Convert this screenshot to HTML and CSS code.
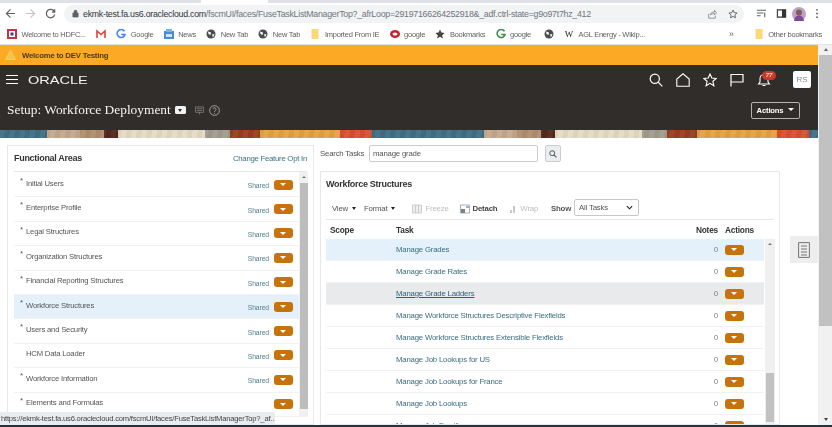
FILE: index.html
```html
<!DOCTYPE html>
<html lang="en">
<head>
<meta charset="utf-8">
<title>Setup: Workforce Deployment</title>
<link rel="stylesheet" href="styles.css">
</head>
<body>
<div class="window">
  <div class="tabstrip"><span class="active-tab"></span></div>
  <div class="toolbar">
    <svg class="tb-icon" viewBox="0 0 12 12"><path d="M11 6H2M6 1.500 1.500 6 6 10.500" fill="none" stroke="#5f6368" stroke-width="1.300"/></svg>
    <svg class="tb-icon" viewBox="0 0 12 12"><path d="M1 6h9M6 1.500 10.500 6 6 10.500" fill="none" stroke="#c0c3c7" stroke-width="1.300"/></svg>
    <svg class="tb-icon" viewBox="0 0 12 12"><path d="M10.200 4A4.600 4.600 0 1 0 10.600 7M10.600 1.400V4.400H7.600" fill="none" stroke="#5f6368" stroke-width="1.300"/></svg>
    <div class="address">
      <svg class="lock" viewBox="0 0 8 10"><path d="M1 4.500h6V9H1zM2.300 4.500V3a1.700 1.700 0 0 1 3.400 0v1.500" fill="#5f6368" stroke="#5f6368" stroke-width=".8"/></svg>
      <span class="url"><b>ekmk-test.fa.us6.oraclecloud.com</b>/fscmUI/faces/FuseTaskListManagerTop?_afrLoop=29197166264252918&amp;_adf.ctrl-state=g9o97t7hz_412</span>
      <svg class="addr-icon share" viewBox="0 0 12 12"><path d="M2 5.500V11h8V8M4 7c.5-2.500 2.500-3.500 5-3.500V1.500L11.500 4.500 9 7V5.500C7 5.500 5.500 6 4 7z" fill="none" stroke="#777" stroke-width=".9"/></svg>
      <svg class="addr-icon" viewBox="0 0 12 12"><path d="M6 1.200 7.400 4.400 10.900 4.800 8.300 7.100 9 10.600 6 8.800 3 10.600 3.700 7.100 1.100 4.800 4.600 4.400z" fill="none" stroke="#555" stroke-width="1"/></svg>
    </div>
    <svg class="tb-icon list" viewBox="0 0 12 12"><path d="M1 2.500h10M1 5.500h7M1 8.500h4M9.500 5v5" fill="none" stroke="#5f6368" stroke-width="1.200"/></svg>
    <svg class="tb-icon" viewBox="0 0 12 12"><path d="M1.500 2h9v8h-9z" fill="none" stroke="#333" stroke-width="1.200"/><path d="M6.500 2h4v8h-4z" fill="#333"/></svg>
    <span class="avatar"><svg viewBox="0 0 14 14"><circle cx="7" cy="7" r="7" fill="#b9a2c8"/><circle cx="7" cy="5.500" r="3" fill="#8a5a58"/><path d="M2 14c.5-4 2.500-5.500 5-5.500S11.500 10 12 14z" fill="#7d4b94"/></svg></span>
    <svg class="tb-icon more" viewBox="0 0 4 12"><circle cx="2" cy="2" r="1" fill="#5f6368"/><circle cx="2" cy="6" r="1" fill="#5f6368"/><circle cx="2" cy="10" r="1" fill="#5f6368"/></svg>
  </div>
  <div class="bookmarks">
    <span class="bm"><svg class="fav" viewBox="0 0 10 10"><path d="M0 0h10v10H0z" fill="#c8313f"/><path d="M2 2h6v6H2z" fill="#fff"/><path d="M3.500 3.500h3v3h-3z" fill="#224a8c"/></svg>Welcome to HDFC...</span>
    <span class="bm"><svg class="fav" viewBox="0 0 10 10"><path d="M1 9V2l4 3.500L9 2v7" fill="none" stroke="#d9443a" stroke-width="1.600"/></svg></span>
    <span class="bm"><svg class="fav" viewBox="0 0 10 10"><path d="M8.500 2.300A4 4 0 1 0 9 5.500H5.200" fill="none" stroke="#4285f4" stroke-width="1.600"/></svg>Google</span>
    <span class="bm"><svg class="fav" viewBox="0 0 10 10"><path d="M0 2h10v8H0z" fill="#4a8bd6"/><path d="M2 0h6v3H2z" fill="#7cb3e8"/><path d="M2 5h6v3H2z" fill="#cfe3f6"/></svg>News</span>
    <span class="bm"><svg class="fav" viewBox="0 0 10 10"><circle cx="5" cy="5" r="4.500" fill="#4a4d50"/><path d="M2 2.500 5 3.500 4.500 6 2.500 5zM6 5.500 8.500 5 7 8.500z" fill="#fff"/></svg>New Tab</span>
    <span class="bm"><svg class="fav" viewBox="0 0 10 10"><circle cx="5" cy="5" r="4.500" fill="#4a4d50"/><path d="M2 2.500 5 3.500 4.500 6 2.500 5zM6 5.500 8.500 5 7 8.500z" fill="#fff"/></svg>New Tab</span>
    <span class="bm"><svg class="fav" viewBox="0 0 10 10"><path d="M1.500 0h7v10h-7z" fill="#fbd976"/></svg>Imported From IE</span>
    <span class="bm"><svg class="fav" viewBox="0 0 10 10"><ellipse cx="5" cy="5" rx="5" ry="4" fill="#c8202c"/><ellipse cx="5" cy="5" rx="2.500" ry="1.500" fill="#fff"/></svg>google</span>
    <span class="bm"><svg class="fav" viewBox="0 0 10 10"><path d="M5 .5 6.400 3.600 9.700 4 7.200 6.200 7.900 9.500 5 7.800 2.100 9.500 2.800 6.200.3 4 3.600 3.600z" fill="#444"/></svg>Bookmarks</span>
    <span class="bm"><svg class="fav" viewBox="0 0 10 10"><path d="M8.500 2.300A4 4 0 1 0 9 5.500H5.200" fill="none" stroke="#3f8f4f" stroke-width="1.600"/></svg>google</span>
    <span class="bm bm-globe"><svg class="fav" viewBox="0 0 10 10"><circle cx="5" cy="5" r="4.500" fill="#4a4d50"/><path d="M2 2.500 5 3.500 4.500 6 2.500 5zM6 5.500 8.500 5 7 8.500z" fill="#fff"/></svg></span>
    <span class="bm"><span class="wiki">W</span>AGL Energy - Wikip...</span>
    <span class="bm-more">»</span>
    <span class="bm"><svg class="fav" viewBox="0 0 10 10"><path d="M1.500 0h7v10h-7z" fill="#fbd976"/></svg>Other bookmarks</span>
  </div>

  <div class="viewport">
    <div class="page">
      <div class="notice">
        <svg class="warn" viewBox="0 0 12 11"><path d="M6 .5 11.500 10.500H.5z" fill="#f7c23c" stroke="#e6e0b0" stroke-width=".7"/></svg>
        <span>Welcome to DEV Testing</span>
      </div>
      <header class="header">
        <div class="nav">
          <span class="burger"><i></i><i></i><i></i></span>
          <span class="logo">ORACLE</span>
          <div class="nav-icons">
            <svg class="nav-icon" viewBox="0 0 14 14"><circle cx="5.800" cy="5.800" r="4.600" fill="none" stroke="#fff" stroke-width="1.200"/><path d="M9.200 9.200 13.300 13.300" stroke="#fff" stroke-width="1.200"/></svg>
            <svg class="nav-icon" viewBox="0 0 14 14"><path d="M.8 13.300V6L7 .8 13.200 6v7.300z" fill="none" stroke="#fff" stroke-width="1.100"/></svg>
            <svg class="nav-icon" viewBox="0 0 14 14"><path d="M7 1 8.800 5 13.300 5.400 9.900 8.300 10.900 12.800 7 10.400 3.100 12.800 4.100 8.300.7 5.400 5.200 5z" fill="none" stroke="#fff" stroke-width="1.100"/></svg>
            <svg class="nav-icon" viewBox="0 0 14 14"><path d="M1 13.500V1.500h12v7.500H1" fill="none" stroke="#fff" stroke-width="1.200"/></svg>
            <span class="bell">
              <svg class="nav-icon" viewBox="0 0 14 14"><path d="M1.500 11h11L11 9V5.500a4 4 0 0 0-8 0V9zM5.500 12.500h3" fill="none" stroke="#fff" stroke-width="1.100"/></svg>
              <span class="badge">77</span>
            </span>
            <span class="user">RS</span>
          </div>
        </div>
        <div class="titlebar">
          <h1 class="title">Setup: Workforce Deployment</h1>
          <span class="title-menu"></span>
          <svg class="chat" viewBox="0 0 10 10"><path d="M.5 1h9v6h-9zM2 3h6M2 5h6M5 7v2.500" fill="none" stroke="#8b8b88" stroke-width=".8"/></svg>
          <svg class="help" viewBox="0 0 12 12"><circle cx="6" cy="6" r="5.300" fill="none" stroke="#c9c9c7" stroke-width=".8"/><path d="M4.300 4.700a1.700 1.700 0 1 1 2.600 1.500c-.6.400-.9.700-.9 1.300M6 8.500v1" fill="none" stroke="#c9c9c7" stroke-width=".8"/></svg>
          <button class="actions-btn">Actions<i></i></button>
        </div>
      </header>
      <div class="banner"></div>
      <main class="main">
        <section class="areas">
          <div class="areas-head">
            <h2>Functional Areas</h2>
            <a class="optin">Change Feature Opt In</a>
          </div>
          <div class="areas-body">
            <div class="areas-list">
              <div class="fa-row"><span class="req">*</span><span class="fa-name">Initial Users</span><span class="shared">Shared</span><span class="drop"></span></div>
              <div class="fa-row"><span class="req">*</span><span class="fa-name">Enterprise Profile</span><span class="shared">Shared</span><span class="drop"></span></div>
              <div class="fa-row"><span class="req">*</span><span class="fa-name">Legal Structures</span><span class="shared">Shared</span><span class="drop"></span></div>
              <div class="fa-row"><span class="req">*</span><span class="fa-name">Organization Structures</span><span class="shared">Shared</span><span class="drop"></span></div>
              <div class="fa-row"><span class="req">*</span><span class="fa-name">Financial Reporting Structures</span><span class="shared">Shared</span><span class="drop"></span></div>
              <div class="fa-row selected"><span class="req">*</span><span class="fa-name">Workforce Structures</span><span class="shared">Shared</span><span class="drop"></span></div>
              <div class="fa-row"><span class="req">*</span><span class="fa-name">Users and Security</span><span class="shared">Shared</span><span class="drop"></span></div>
              <div class="fa-row"><span class="req"></span><span class="fa-name">HCM Data Loader</span><span class="shared">Shared</span><span class="drop"></span></div>
              <div class="fa-row"><span class="req">*</span><span class="fa-name">Workforce Information</span><span class="shared">Shared</span><span class="drop"></span></div>
              <div class="fa-row"><span class="req">*</span><span class="fa-name">Elements and Formulas</span><span class="shared"></span><span class="drop"></span></div>
            </div>
            <div class="mini-scroll areas-scroll"><i class="arrow-up"></i><i class="thumb"></i></div>
          </div>
        </section>
        <section class="tasks">
          <div class="search">
            <label class="search-label">Search Tasks</label>
            <input class="search-input" value="manage grade">
            <button class="search-btn"><svg viewBox="0 0 10 10"><circle cx="4" cy="4" r="3" fill="none" stroke="#5a6a72" stroke-width="1.300"/><path d="M6.300 6.300 9.300 9.300" stroke="#5a6a72" stroke-width="1.500"/></svg></button>
          </div>
          <div class="card">
            <h3 class="card-title">Workforce Structures</h3>
            <div class="tools">
              <span class="tool">View<i class="caret"></i></span>
              <span class="tool format">Format<i class="caret"></i></span>
              <span class="tool off freeze"><svg class="tool-icon" viewBox="0 0 10 10"><path d="M.5 1h9v8h-9zM3.500 1v8M6.500 1v8" fill="#eee" stroke="#c4c4c4" stroke-width=".8"/></svg>Freeze</span>
              <span class="tool strong detach"><svg class="tool-icon" viewBox="0 0 10 10"><path d="M.5 1h9v8h-9z" fill="#fff" stroke="#999" stroke-width=".8"/><path d="M1 5h4v4H1z" fill="#76858f"/><path d="M6 2h3v2H6z" fill="#9fb4c2"/></svg>Detach</span>
              <span class="tool off wrap"><svg class="tool-icon small" viewBox="0 0 8 10"><path d="M1 9h2V6H1zM4 9h2V2H4z" fill="#c9c9c9"/></svg>Wrap</span>
              <span class="tool show">Show</span>
              <span class="select">All Tasks<svg viewBox="0 0 8 5"><path d="M1 1l3 3 3-3" fill="none" stroke="#222" stroke-width="1.300"/></svg></span>
            </div>
            <div class="t-head">
              <span>Scope</span><span>Task</span><span class="num">Notes</span><span class="act">Actions</span>
            </div>
            <div class="t-body">
              <div class="t-rows">
                <div class="t-row selected"><span></span><a>Manage Grades</a><span class="num">0</span><span class="act"><span class="drop"></span></span></div>
                <div class="t-row"><span></span><a>Manage Grade Rates</a><span class="num">0</span><span class="act"><span class="drop"></span></span></div>
                <div class="t-row hover"><span></span><a>Manage Grade Ladders</a><span class="num">0</span><span class="act"><span class="drop"></span></span></div>
                <div class="t-row"><span></span><a>Manage Workforce Structures Descriptive Flexfields</a><span class="num">0</span><span class="act"><span class="drop"></span></span></div>
                <div class="t-row"><span></span><a>Manage Workforce Structures Extensible Flexfields</a><span class="num">0</span><span class="act"><span class="drop"></span></span></div>
                <div class="t-row"><span></span><a>Manage Job Lookups for US</a><span class="num">0</span><span class="act"><span class="drop"></span></span></div>
                <div class="t-row"><span></span><a>Manage Job Lookups for France</a><span class="num">0</span><span class="act"><span class="drop"></span></span></div>
                <div class="t-row"><span></span><a>Manage Job Lookups</a><span class="num">0</span><span class="act"><span class="drop"></span></span></div>
                <div class="t-row"><span></span><a>Manage Job Families</a><span class="num">0</span><span class="act"><span class="drop"></span></span></div>
              </div>
              <div class="mini-scroll tasks-scroll"><i class="arrow-up"></i><i class="thumb"></i></div>
            </div>
          </div>
        </section>
        <aside class="side">
          <span class="side-tab"><svg viewBox="0 0 12 16"><path d="M.6.600h10.800v14.800H.6zM3 4h6M3 7h6M3 10h6M3 13h6" fill="none" stroke="#666" stroke-width=".9"/></svg></span>
        </aside>
      </main>
    </div>
    <div class="page-scroll"><i class="up"></i><i class="page-thumb"></i><i class="down"></i></div>
  </div>
  <div class="status">https://ekmk-test.fa.us6.oraclecloud.com/fscmUI/faces/FuseTaskListManagerTop?_af...</div>
</div>
</body>
</html>
```

FILE: styles.css
```css
* { box-sizing: border-box; }
html, body { margin: 0; padding: 0; height: 100%; overflow: hidden; background: #fff; }
body { font-family: "Liberation Sans", Arial, sans-serif; font-size: 7.800px; letter-spacing: -.2px; color: #444; }
h1, h2, h3 { margin: 0; }
i { display: block; }

.window { position: relative; width: 832px; height: 427px; display: flex; flex-direction: column; overflow: hidden; filter: blur(.3px); border-bottom: 2px solid #25333f; }

/* browser chrome */
.tabstrip { height: 3px; background: #dee1e6; flex: none; position: relative; }
.active-tab { display: block; width: 67px; height: 3px; margin-left: 201px; background: #fff; }
.toolbar { height: 21px; flex: none; display: flex; align-items: center; padding: 0 0 0 5px; gap: 9px; }
.tb-icon { width: 11px; height: 11px; flex: none; }
.address { height: 18px; width: 680px; margin-left: -1px; flex: none; background: #f1f3f4; border-radius: 9px; display: flex; align-items: center; padding: 0 6px 0 7px; }
.lock { width: 7px; height: 9px; flex: none; margin-right: 4px; margin-left: 1px; }
.url { font-size: 8.800px; letter-spacing: -.256px; color: #70757a; white-space: nowrap; flex: 1; }
.url b { font-weight: normal; color: #33373a; }
.addr-icon { width: 10px; height: 10px; flex: none; margin-left: 9px; }
.share { margin-right: 2px; }
.list { margin-left: 3px; }
.avatar { width: 14px; height: 14px; flex: none; display: block; margin-left: -4px; }
.avatar svg { width: 14px; height: 14px; display: block; }
.more { width: 4px; }

.bookmarks { height: 21px; flex: none; display: flex; align-items: center; gap: 10.300px; padding: 0 10px 0 7px; font-size: 7.500px; letter-spacing: -.25px; color: #5c5f63; border-bottom: 1px solid #e3e5e8; white-space: nowrap; }
.bm { display: flex; align-items: center; gap: 4.500px; }
.bm-globe { margin-left: 3px; }
.fav { width: 10px; height: 10px; flex: none; }
.wiki { font-family: "Liberation Serif", serif; font-size: 9px; color: #222; margin-right: 1px; }
.bm-more { margin-left: auto; margin-right: 10px; font-size: 8.500px; }

.viewport { flex: 1; min-height: 0; display: flex; }
.page { flex: 1; min-width: 0; display: flex; flex-direction: column; }
.page-scroll { width: 14px; flex: none; background: #f1f1f1; display: flex; flex-direction: column; align-items: center; padding-top: 3px; padding-left: 1px; }
.up { border: 2.500px solid transparent; border-top: 0; border-bottom: 3px solid #666; width: 0; }
.page-thumb { width: 13px; height: 271px; margin-top: 4px; background: #c1c1c1; }
.down { border: 2.500px solid transparent; border-bottom: 0; border-top: 3px solid #444; width: 0; margin-top: 92px; }

/* notice */
.notice { height: 20px; flex: none; background: #fcaa26; display: flex; align-items: center; padding-left: 5px; gap: 6px; font-size: 7.800px; letter-spacing: -.22px; font-weight: bold; color: #4a3a20; }
.warn { width: 11px; height: 10px; }

/* header */
.header { height: 65px; flex: none; background: #312d2a; color: #fff; padding: 0 7px; }
.nav { height: 27px; padding-top: 2px; display: flex; align-items: center; }
.burger { width: 12px; display: flex; flex-direction: column; gap: 2.500px; margin-left: -1px; }
.burger i { height: 1.300px; background: #fff; }
.logo { display: block; font-size: 11px; letter-spacing: 0; margin-left: 10px; color: #f3f3f3; transform: scaleX(1.32); transform-origin: left center; }
.nav-icons { margin-left: auto; display: flex; align-items: center; gap: 13px; }
.nav-icon { width: 14px; height: 14px; display: block; }
.bell { position: relative; display: block; }
.badge { position: absolute; left: 5px; top: -2px; width: 14px; height: 9px; border-radius: 5px; background: #c63a27; color: #f5d7d0; font-size: 6px; letter-spacing: 0; font-style: italic; font-weight: bold; line-height: 9px; text-align: center; }
.user { width: 18px; height: 17px; margin-left: 9px; border-radius: 2px; background: #fff; color: #8b8b8b; font-size: 8px; letter-spacing: 0; line-height: 17px; text-align: center; }
.titlebar { height: 36px; display: flex; align-items: center; }
.title { font-family: "Liberation Serif", serif; font-size: 13.400px; letter-spacing: 0; font-weight: normal; color: #f5f4f2; white-space: nowrap; }
.title-menu { width: 11px; height: 8px; margin-left: 4px; border-radius: 1.500px; background: #f2f2f2; position: relative; display: block; }
.title-menu::after { content: ""; position: absolute; left: 3px; top: 3px; border: 2.500px solid transparent; border-bottom: 0; border-top: 3px solid #312d2a; }
.chat { width: 9px; height: 9px; margin-left: 9px; }
.help { width: 11px; height: 11px; margin-left: 5px; }
.actions-btn { margin-left: auto; margin-right: 11px; width: 49px; height: 17px; border: 1px solid #b5b3b0; border-radius: 2px; background: transparent; color: #fff; font: bold 7.700px "Liberation Sans", sans-serif; letter-spacing: -.2px; display: flex; align-items: center; justify-content: center; gap: 5px; padding: 0; }
.actions-btn i { border: 3px solid transparent; border-bottom: 0; border-top: 3.500px solid #fff; margin-top: -2px; }

/* decorative banner */
.banner { height: 8px; flex: none; background:
  repeating-linear-gradient(100deg, rgba(255,255,255,.04) 0 5px, rgba(0,0,0,.04) 5px 10px) 0 0 / 100% 100%,
  repeating-linear-gradient(90deg, #3f6f85 0 47px, #c6a98c 47px 80px, #b08f6e 80px 104px, #54291f 104px 118px, #e5dbc5 118px 205px, #a29c8f 205px 230px, #9a3f1d 230px 260px, #e8a048 260px 340px, #d9502f 340px 372px, #3f6f85 372px 437px); }

/* main */
.main { flex: 1; min-height: 0; display: flex; padding: 7px 0 0 7px; overflow: hidden; }

/* functional areas */
.areas { width: 307px; flex: none; border: 1px solid #e8e8e8; padding: 0 6px; background: #fff; }
.areas-head { height: 26px; display: flex; align-items: center; justify-content: space-between; padding-bottom: 1px; border-bottom: 1px solid #e6e6e6; }
.areas-head h2 { font-size: 9px; letter-spacing: -.3px; font-weight: bold; color: #333; }
.optin { font-size: 7.800px; letter-spacing: -.27px; color: #3d6f82; }
.areas-body { display: flex; }
.areas-list { width: 285px; flex: none; padding-top: 1px; }
.fa-row { height: 24.400px; display: flex; align-items: center; border-bottom: 1px solid #f2f2f2; padding-right: 6px; }
.fa-row.selected { background: #e4f1fb; }
.req { width: 12px; flex: none; padding-left: 6px; align-self: flex-start; padding-top: 3px; font-size: 8px; color: #555; }
.fa-name { flex: 1; font-size: 7.700px; color: #555; padding-bottom: 3px; }
.shared { font-size: 6.800px; letter-spacing: -.12px; color: #53808f; margin-right: 5px; padding-top: 2px; }
.drop { width: 19px; height: 10px; flex: none; border-radius: 3px; background: #c7730c; position: relative; display: block; }
.drop::after { content: ""; position: absolute; left: 6px; top: 3.500px; border: 3.500px solid transparent; border-bottom: 0; border-top: 3px solid #fff; }
.mini-scroll { flex: none; background: #f0f0f0; display: flex; flex-direction: column; align-items: center; }
.arrow-up { border: 2px solid transparent; border-top: 0; border-bottom: 2.500px solid #777; width: 0; margin-top: 4px; }
.areas-scroll { width: 9px; }
.areas-scroll .thumb { width: 8px; height: 226px; margin-top: 5px; background: #bdbdbd; }

/* tasks */
.tasks { width: 460px; flex: none; margin-left: 6px; display: flex; flex-direction: column; }
.search { height: 17px; flex: none; display: flex; align-items: center; }
.search-label { color: #555; width: 49px; flex: none; white-space: nowrap; }
.search-input { width: 169px; height: 17px; border: 1px solid #c8ccd0; border-radius: 2px; padding: 0 3px; font: 7.800px "Liberation Sans", sans-serif; letter-spacing: -.2px; color: #555; background: #fff; outline: 0; }
.search-btn { width: 16px; height: 17px; margin-left: 7px; padding: 0; border: 1px solid #c9cdd0; border-radius: 2px; background: #ebedef; display: flex; align-items: center; justify-content: center; }
.search-btn svg { width: 8px; height: 8px; }
.card { flex: 1; min-height: 0; margin-top: 9px; border: 1px solid #e8e8e8; padding: 0 5px; overflow: hidden; }
.card-title { height: 25px; font-size: 9px; letter-spacing: -.3px; font-weight: bold; color: #333; line-height: 24px; }
.tools { height: 23px; padding-top: 1px; display: flex; align-items: center; padding-left: 6px; border-bottom: 1px solid #e6e6e6; color: #555; white-space: nowrap; }
.tool { display: flex; align-items: center; }
.caret { border: 2.500px solid transparent; border-bottom: 0; border-top: 3px solid #222; margin-left: 4px; width: 0; }
.format { margin-left: 8px; }
.freeze { margin-left: 17px; }
.detach { margin-left: 11px; }
.wrap { margin-left: 12px; }
.show { margin-left: 13px; font-weight: bold; color: #555; }
.off { color: #b9bdc1; }
.strong { font-weight: bold; color: #444; }
.tool-icon { width: 10px; height: 10px; margin-right: 3px; }
.tool-icon.small { width: 8px; }
.select { width: 65px; height: 17px; margin-left: 3px; margin-top: -2px; border: 1px solid #c5c9cd; border-radius: 2px; display: flex; align-items: center; justify-content: space-between; padding: 0 5px 0 4px; color: #555; }
.select svg { width: 7px; height: 5px; }
.t-head, .t-row { display: grid; grid-template-columns: 66px 1fr 28px 46px; align-items: center; padding-left: 4px; }
.t-head { width: 438px; height: 19px; font-size: 8.300px; font-weight: bold; color: #333; }
.num { text-align: right; }
.act { padding-left: 7px; }
.t-body { display: flex; }
.t-rows { width: 438px; flex: none; }
.t-row { height: 22px; border-bottom: 1px solid #f2f2f2; }
.t-row a { color: #3c6e81; }
.t-row .num { color: #7a7a7a; }
.t-row .act { display: flex; }
.t-row.selected { background: #e4f1fb; }
.t-row.hover { background: #e9eaeb; }
.t-row.hover a { text-decoration: underline; color: #2f6176; }
.tasks-scroll { width: 10px; margin-left: 1px; height: 190px; }
.tasks-scroll .thumb { width: 8px; height: 49px; margin-top: 128px; background: #c1c1c1; }

/* right side */
.side { flex: 1; display: flex; justify-content: flex-end; padding-top: 91px; }
.side-tab { width: 28px; height: 27px; background: #eeeeee; display: flex; align-items: center; justify-content: center; }
.side-tab svg { width: 12px; height: 16px; }

/* hover url bubble */
.status { position: absolute; left: 0; bottom: 0; width: 275px; height: 13px; background: #e9ebee; border-radius: 0 3px 0 0; color: #444; font-size: 7.600px; line-height: 13px; padding-left: 1px; white-space: nowrap; overflow: hidden; }
```
